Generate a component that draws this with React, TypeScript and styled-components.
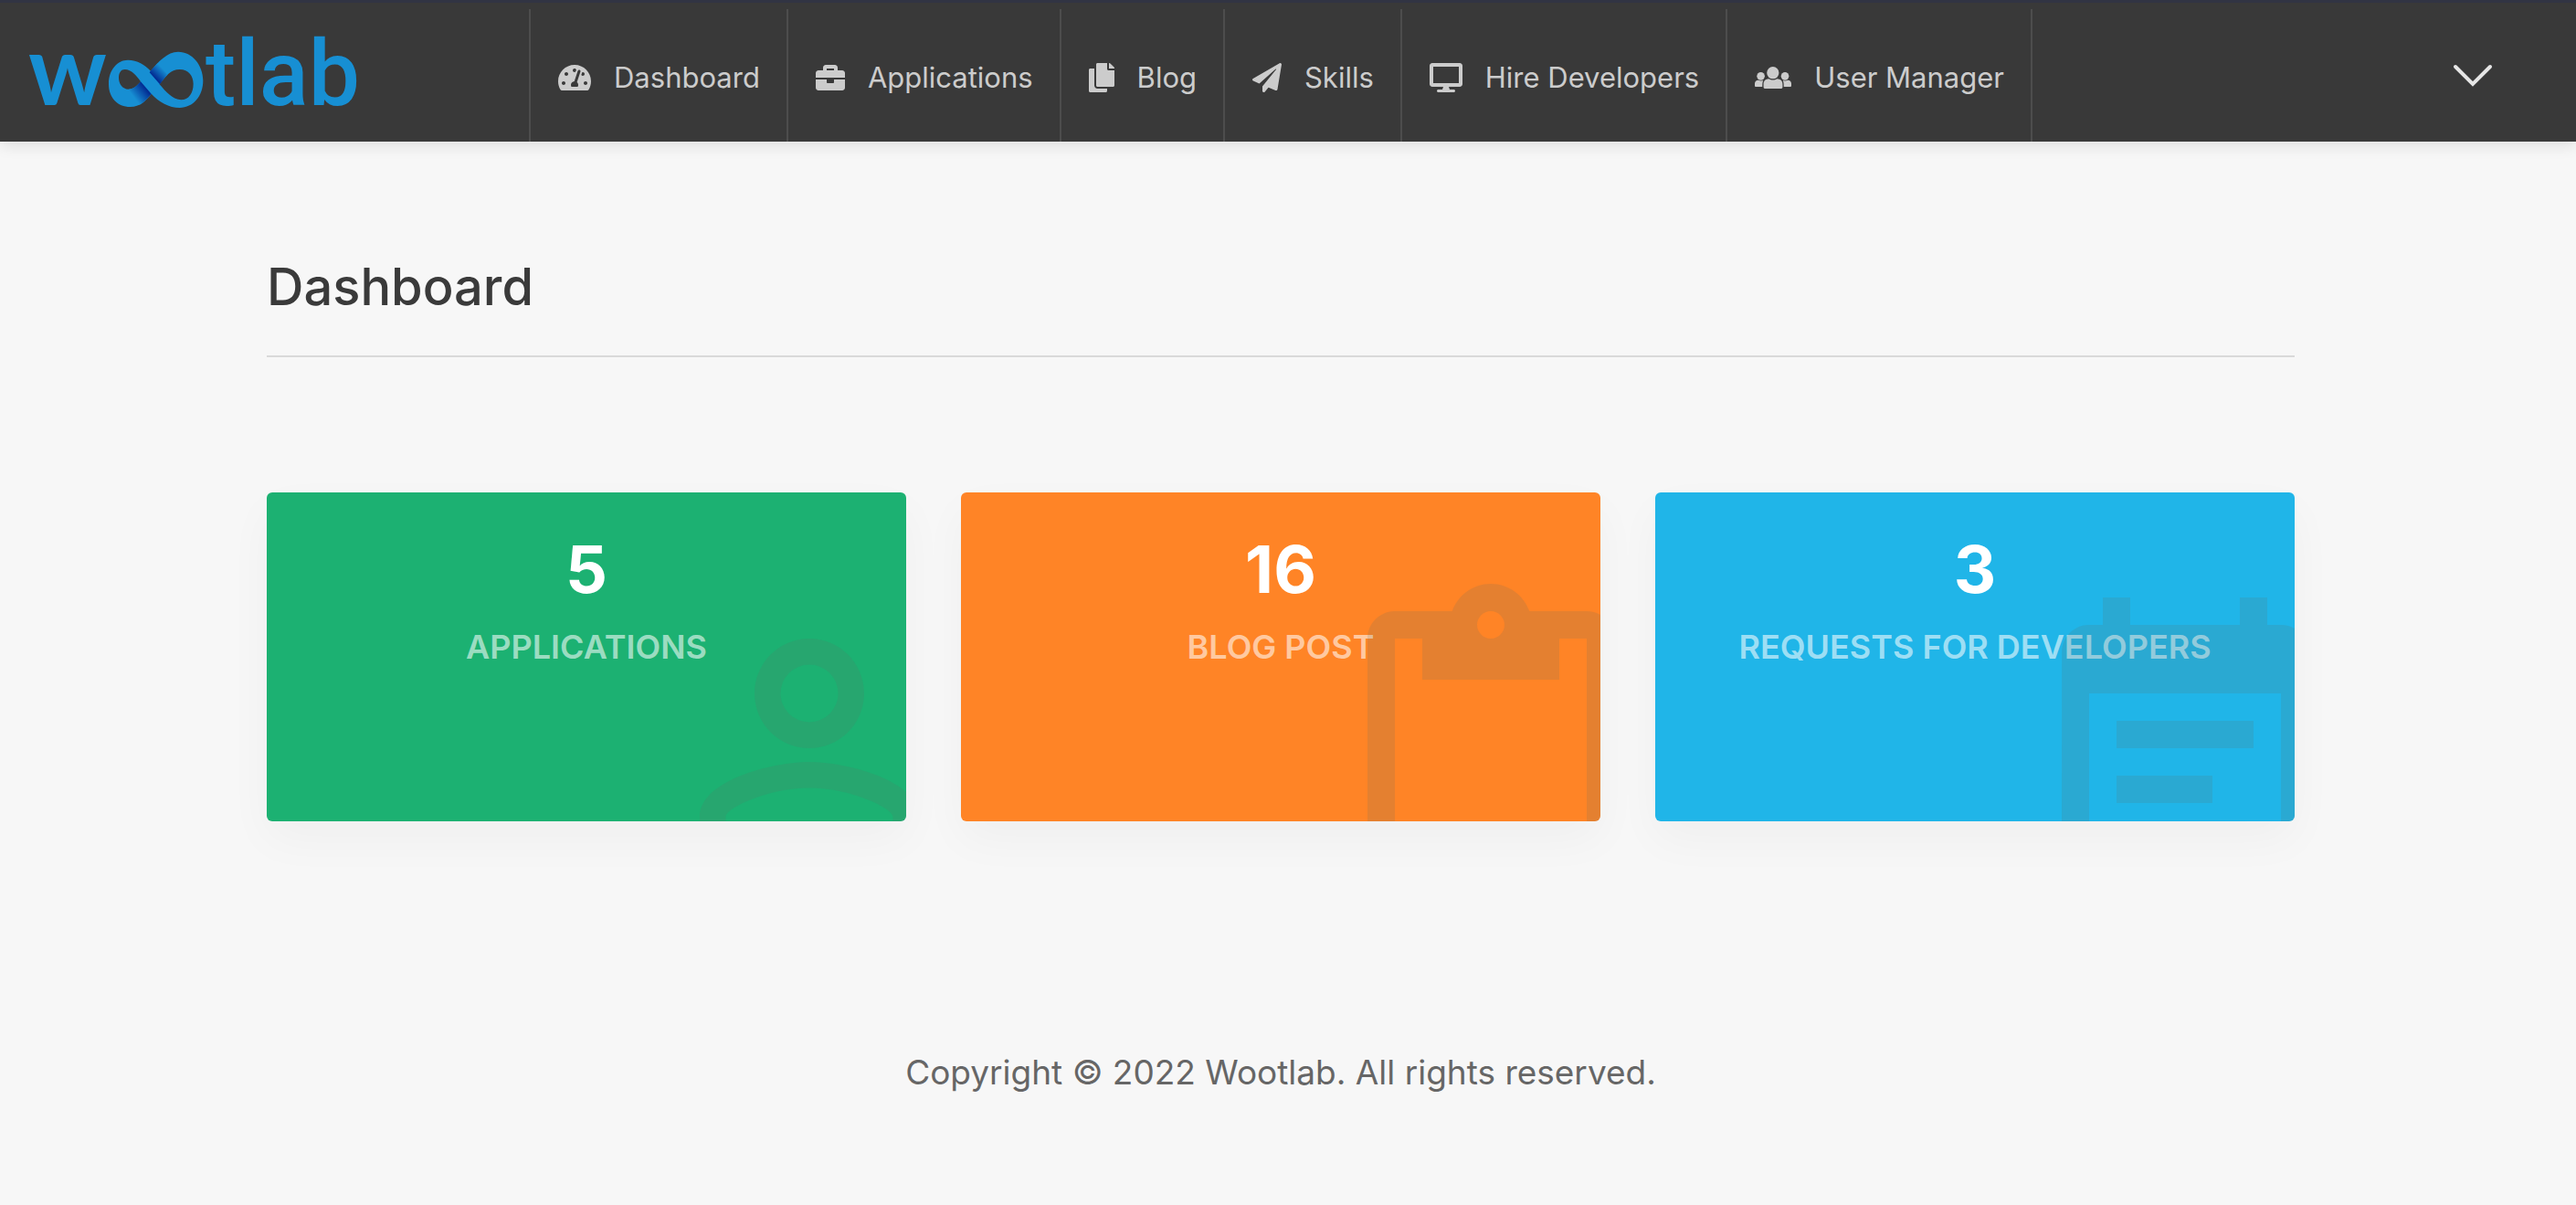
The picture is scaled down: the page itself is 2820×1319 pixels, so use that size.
import React from "react";
import styled, { createGlobalStyle } from "styled-components";
import type { IconType } from "react-icons";
import { FaTachometerAlt, FaBriefcase, FaCopy, FaPaperPlane, FaDesktop } from "react-icons/fa";

const GlobalStyle = createGlobalStyle`
  *, *::before, *::after { box-sizing: border-box; }
  body {
    margin: 0;
    background: #f7f7f7;
    color: #3a3a3a;
    font-family: Inter, "Liberation Sans", sans-serif;
  }
`;

const Header = styled.header`
  position: relative;
  display: flex;
  align-items: stretch;
  height: 155px;
  border-top: 3px solid #313443;
  background: #393939;
  box-shadow: 0 4px 16px rgba(0, 0, 0, 0.11);
`;

const Brand = styled.a`
  display: block;
  flex: 0 0 579px;
  padding: 7px 0 0 20px;

  svg {
    display: block;
  }
`;

const Nav = styled.nav`
  display: flex;
  flex: 1;
  margin-top: 7px;
`;

const NavList = styled.ul`
  display: flex;
  margin: 0;
  padding: 0;
  list-style: none;
  border-left: 2px solid #4d4d4d;
`;

const NavItem = styled.li`
  display: flex;
  border-right: 2px solid #4d4d4d;
`;

const NavLink = styled.a`
  display: flex;
  align-items: center;
  gap: 25px;
  padding: 4px 29px 0 30px;
  color: #cccccc;
  font-size: 31px;
  line-height: 40px;
  text-decoration: none;
  white-space: nowrap;
`;

const NavIcon = styled.span<{ $width: number }>`
  display: flex;
  flex: none;
  width: ${(p) => p.$width}px;

  svg {
    width: 100%;
    height: 32px;
  }
`;

const MenuButton = styled.button`
  display: flex;
  align-items: center;
  justify-content: center;
  width: 80px;
  margin-right: 73px;
  padding: 8px 0 0;
  border: 0;
  background: none;
`;

const Page = styled.div`
  padding: 126px 16px 0 0;
`;

const Container = styled.main`
  max-width: 2220px;
  margin: 0 auto;
`;

const Title = styled.h1`
  margin: 0;
  padding-bottom: 42px;
  border-bottom: 2px solid #d9d9d9;
  font-size: 56px;
  font-weight: 500;
  line-height: 66px;
`;

const Cards = styled.section`
  display: grid;
  grid-template-columns: repeat(3, 1fr);
  gap: 60px;
  margin-top: 148px;
`;

const CardShadow = styled.div`
  border-radius: 6px;
  box-shadow: 0 20px 50px rgba(0, 0, 0, 0.035);
`;

const Card = styled.article<{ $color: string }>`
  position: relative;
  height: 360px;
  padding: 40px 20px;
  overflow: hidden;
  border-radius: 6px;
  background: ${(p) => p.$color};
  text-align: center;
`;

const CardValue = styled.div`
  color: #ffffff;
  font-size: 72px;
  font-weight: 700;
  line-height: 88px;
`;

const CardLabel = styled.div`
  margin-top: 20px;
  color: rgba(255, 255, 255, 0.58);
  font-size: 36px;
  font-weight: 600;
  line-height: 42px;
  text-transform: uppercase;
`;

const Watermark = styled.svg<{ $right: number }>`
  position: absolute;
  top: 100px;
  right: ${(p) => p.$right}px;
  width: 360px;
  height: 360px;
  fill: rgba(92, 112, 100, 0.17);
`;

const Footer = styled.footer`
  margin-top: 250px;
  padding-bottom: 100px;
  color: #666666;
  font-size: 37px;
  line-height: 50px;
  text-align: center;
`;

const Wordmark = styled.text<{ $family: string; $size: number; $weight: number }>`
  fill: #178fd3;
  font-family: ${(p) => p.$family}, sans-serif;
  font-size: ${(p) => p.$size}px;
  font-weight: ${(p) => p.$weight};
`;

const Logo = () => (
  <svg width="400" height="140" viewBox="20 10 400 140" role="img" aria-label="wootlab">
    <defs>
      <linearGradient id="foldTop" gradientUnits="userSpaceOnUse" x1="450" y1="166" x2="478" y2="138">
        <stop offset="0" stopColor="#022c92" />
        <stop offset="1" stopColor="#178fd3" />
      </linearGradient>
      <linearGradient id="foldBottom" gradientUnits="userSpaceOnUse" x1="418" y1="200" x2="380" y2="230">
        <stop offset="0" stopColor="#022c92" />
        <stop offset="1" stopColor="#178fd3" />
      </linearGradient>
    </defs>
    <Wordmark x="31" y="115" $family="Lato" $size={107} $weight={700}>
      w
    </Wordmark>
    <Wordmark x="225" y="115" $family="Roboto" $size={100} $weight={500}>
      tlab
    </Wordmark>
    <g transform="translate(20 30) scale(0.3333)">
      <path
        fill="#178fd3"
        fillRule="evenodd"
        d="M297 185C297 140 325 107 360 107C392 107 415 122 435 143C460 112 490 80 525 80C572 80 607 125 607 175C607 225 575 264 530 264C495 264 462 245 437 218C420 240 400 261 368 261C325 261 297 230 297 185ZM330 165C330 185 342 203 362 203C378 203 390 192 402 178C388 158 372 138 350 138C338 138 330 148 330 165ZM464 187C485 212 508 238 535 238C560 238 575 215 575 185C575 160 560 138 530 138C500 138 485 160 464 187Z"
      />
      <path fill="url(#foldTop)" d="M431 148C440 136 450 126 458 118L490 155C481 165 472 176 465 187Z" />
      <path fill="url(#foldBottom)" d="M402 178L437 218C425 233 413 246 398 254L362 203C378 203 390 192 402 178Z" />
    </g>
  </svg>
);

const UsersIcon = () => (
  <svg viewBox="0 0 121 96" fill="currentColor" aria-hidden="true">
    <circle cx="60" cy="32" r="20" />
    <circle cx="20" cy="43" r="13" />
    <circle cx="100" cy="43" r="13" />
    <path d="M29 80V70C29 58 36 53 46 52C54 57 66 57 74 52C85 53 92 58 92 70V80Q92 84 88 84H33Q29 84 29 80Z" />
    <path d="M0 75V68C0 60 5 56 12 56C17 59 23 59 28 57C25 63 25 70 25 78H3Q0 78 0 75Z" />
    <path d="M121 75V68C121 60 116 56 109 56C104 59 98 59 93 57C96 63 96 70 96 78H118Q121 78 121 75Z" />
  </svg>
);

const NAV: { label: string; Icon: IconType | React.FC; width: number }[] = [
  { label: "Dashboard", Icon: FaTachometerAlt, width: 36 },
  { label: "Applications", Icon: FaBriefcase, width: 32 },
  { label: "Blog", Icon: FaCopy, width: 28 },
  { label: "Skills", Icon: FaPaperPlane, width: 32 },
  { label: "Hire Developers", Icon: FaDesktop, width: 36 },
  { label: "User Manager", Icon: UsersIcon, width: 40 },
];

const CARDS = [
  {
    value: 5,
    label: "Applications",
    color: "#1cb172",
    right: -74,
    path: "M12 5.9a2.1 2.1 0 1 1 0 4.2 2.1 2.1 0 0 1 0-4.2m0 9c2.97 0 6.1 1.46 6.1 2.1v1.1H5.9V17c0-.64 3.13-2.1 6.1-2.1M12 4C9.79 4 8 5.79 8 8s1.79 4 4 4 4-1.79 4-4-1.79-4-4-4zm0 9c-2.67 0-8 1.34-8 4v3h16v-3c0-2.66-5.33-4-8-4z",
  },
  {
    value: 16,
    label: "Blog Post",
    color: "#ff8426",
    right: -60,
    path: "M19 2h-4.18C14.4.84 13.3 0 12 0c-1.3 0-2.4.84-2.82 2H5c-1.1 0-2 .9-2 2v16c0 1.1.9 2 2 2h14c1.1 0 2-.9 2-2V4c0-1.1-.9-2-2-2zm-7 0c.55 0 1 .45 1 1s-.45 1-1 1-1-.45-1-1 .45-1 1-1zm7 18H5V4h2v3h10V4h2v16z",
  },
  {
    value: 3,
    label: "Requests for Developers",
    color: "#20b5e8",
    right: -60,
    path: "M17 10H7v2h10v-2zm2-7h-1V1h-2v2H8V1H6v2H5c-1.11 0-1.99.9-1.99 2L3 19c0 1.1.89 2 2 2h14c1.1 0 2-.9 2-2V5c0-1.1-.9-2-2-2zm0 16H5V8h14v11zm-5-5H7v2h7v-2z",
  },
];

export default function App() {
  return (
    <>
      <GlobalStyle />
      <Header>
        <Brand href="#">
          <Logo />
        </Brand>
        <Nav>
          <NavList>
            {NAV.map(({ label, Icon, width }) => (
              <NavItem key={label}>
                <NavLink href="#">
                  <NavIcon $width={width}>
                    <Icon />
                  </NavIcon>
                  {label}
                </NavLink>
              </NavItem>
            ))}
          </NavList>
        </Nav>
        <MenuButton type="button" aria-label="Open menu">
          <svg width="44" height="26" viewBox="0 0 44 26" fill="none" stroke="#e6e6e6" strokeWidth="4" strokeLinecap="round">
            <path d="M3 3l19 19L41 3" />
          </svg>
        </MenuButton>
      </Header>
      <Page>
        <Container>
          <Title>Dashboard</Title>
          <Cards>
            {CARDS.map((card) => (
              <CardShadow key={card.label}>
                <Card $color={card.color}>
                  <CardValue>{card.value}</CardValue>
                  <CardLabel>{card.label}</CardLabel>
                  <Watermark $right={card.right} viewBox="0 0 24 24" aria-hidden="true">
                    <path d={card.path} />
                  </Watermark>
                </Card>
              </CardShadow>
            ))}
          </Cards>
        </Container>
        <Footer>Copyright © 2022 Wootlab. All rights reserved.</Footer>
      </Page>
    </>
  );
}
